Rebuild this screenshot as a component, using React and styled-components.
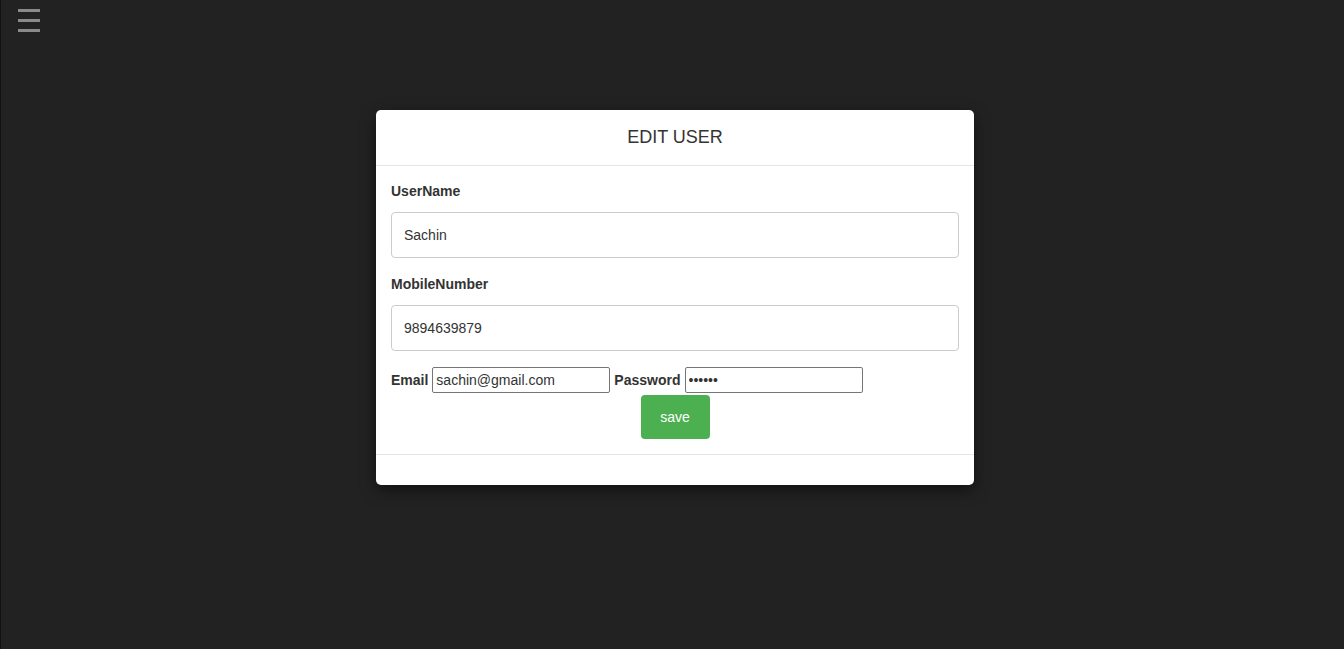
import React from 'react';
import styled, { createGlobalStyle } from 'styled-components';

const GlobalStyle = createGlobalStyle`
    html, body {
        margin: 0;
        padding: 0;
        background: #222222;
        font-family: 'Liberation Sans', Arial, Helvetica, sans-serif;
    }
`

const Page = styled.div`
    min-height: 649px;
    box-sizing: border-box;
    border-left: 1px solid #111111;
    background: #222222;
    position: relative;
`

const MenuButton = styled.button`
    position: absolute;
    top: 9px;
    left: 17px;
    width: 22px;
    padding: 0;
    border: none;
    background: transparent;
    display: flex;
    flex-direction: column;
    gap: 7px;
    cursor: pointer;
`

const MenuBar = styled.span`
    display: block;
    height: 3px;
    width: 22px;
    background: #8a8a8a;
`

const Wrapper = styled.div`
    display: flex;
    justify-content: center;
    padding-top: 110px;
    padding-left: 5px;
`

const Card = styled.div`
    width: 598px;
    background: #ffffff;
    border-radius: 5px;
    box-shadow: 0 5px 15px rgba(0, 0, 0, 0.5);
    color: #333333;
`

const CardHeader = styled.div`
    height: 56px;
    box-sizing: border-box;
    border-bottom: 1px solid #e5e5e5;
    display: flex;
    align-items: center;
    justify-content: center;
`

const Title = styled.h4`
    margin: 0;
    font-size: 18px;
    font-weight: normal;
    color: #333333;
`

const CardBody = styled.form`
    padding: 15px;
    font-size: 14px;
`

const Label = styled.label`
    display: block;
    font-weight: bold;
    line-height: 20px;
    margin-bottom: 11px;
`

const TextInput = styled.input`
    display: block;
    width: 100%;
    height: 46px;
    box-sizing: border-box;
    padding: 12px 12px;
    margin-bottom: 16px;
    border: 1px solid #cccccc;
    border-radius: 4px;
    font-family: inherit;
    font-size: 14px;
    color: #333333;
`

const InlineRow = styled.div`
    display: flex;
    align-items: center;
    gap: 4px;
    height: 26px;
`

const InlineLabel = styled.label`
    font-weight: bold;
    font-size: 14px;
`

const SmallInput = styled.input`
    width: 178px;
    height: 26px;
    box-sizing: border-box;
    padding: 1px 3px;
    border: 1px solid #767676;
    border-radius: 2px;
    font-family: inherit;
    font-size: 14px;
    color: #333333;
`

const SaveButton = styled.button`
    display: block;
    margin: 2px auto 0;
    width: 69px;
    height: 44px;
    border: none;
    border-radius: 4px;
    background: #4caf50;
    color: #ffffff;
    font-family: inherit;
    font-size: 14px;
    cursor: pointer;
`

const CardFooter = styled.div`
    height: 30px;
    border-top: 1px solid #e5e5e5;
`

function App() {
    return (
        <Page>
            <GlobalStyle />
            <MenuButton type="button" aria-label="menu">
                <MenuBar />
                <MenuBar />
                <MenuBar />
            </MenuButton>
            <Wrapper>
                <Card>
                    <CardHeader>
                        <Title>EDIT USER</Title>
                    </CardHeader>
                    <CardBody onSubmit={e => e.preventDefault()}>
                        <Label htmlFor="username">UserName</Label>
                        <TextInput id="username" defaultValue="Sachin" />
                        <Label htmlFor="mobile">MobileNumber</Label>
                        <TextInput id="mobile" defaultValue="9894639879" />
                        <InlineRow>
                            <InlineLabel htmlFor="email">Email</InlineLabel>
                            <SmallInput id="email" defaultValue="sachin@gmail.com" />
                            <InlineLabel htmlFor="password">Password</InlineLabel>
                            <SmallInput id="password" type="password" defaultValue="sachin" />
                        </InlineRow>
                        <SaveButton type="submit">save</SaveButton>
                    </CardBody>
                    <CardFooter />
                </Card>
            </Wrapper>
        </Page>
    );
}

export default App;
